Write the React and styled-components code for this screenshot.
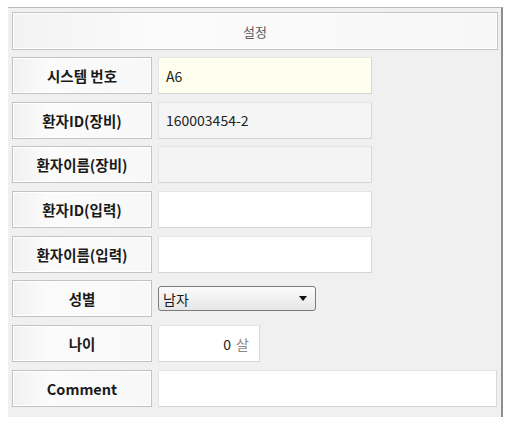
import { Fragment } from "react";
import styled, { createGlobalStyle } from "styled-components";

const GlobalStyle = createGlobalStyle`
  body {
    margin: 0;
    background: #ffffff;
    font-family: "Noto Sans CJK KR", "Noto Sans", sans-serif;
  }
`;

const Panel = styled.section`
  margin: 7px 0 0 8px;
  width: 486px;
  height: 405px;
  padding: 4px 3px 0 4px;
  background: #f0f0f0;
  border-top: 1px solid #b9b9b9;
  border-right: 2px solid #8e8e8e;
  display: flex;
  flex-direction: column;
  gap: 7px;
`;

const Header = styled.div`
  height: 36px;
  display: flex;
  align-items: center;
  justify-content: center;
  background: linear-gradient(to right, #f2f2f2, #fbfbfb 30%, #f7f7f7);
  border: 1px solid #c3c3c3;
  box-shadow: inset 0 0 0 1px #ffffff;
  color: #5a5a5a;
  font-size: 13px;
`;

const Form = styled.div`
  display: grid;
  grid-template-columns: 140px 1fr;
  grid-auto-rows: 37px;
  column-gap: 6px;
  row-gap: 7.7px;
`;

const Label = styled.div`
  display: flex;
  align-items: center;
  justify-content: center;
  background: linear-gradient(to right, #f1f1f1, #fbfbfb 25%, #f8f8f8);
  border: 1px solid #c2c2c2;
  box-shadow: inset 0 0 0 1px #ffffff;
  color: #1a1a1a;
  font-size: 14.5px;
  font-weight: 700;
`;

const Cell = styled.div`
  display: flex;
  align-items: center;
`;

const Field = styled.div`
  box-sizing: border-box;
  width: ${p => p.$width}px;
  height: 100%;
  display: flex;
  align-items: center;
  justify-content: ${p => (p.$right ? "flex-end" : "flex-start")};
  padding: ${p => (p.$right ? "0 10px 0 0" : "0 0 0 7px")};
  background: ${p => p.$bg || "#ffffff"};
  border: 1px solid #e4e4e4;
  border-bottom-color: #d4d4d4;
  border-right-color: #d8d8d8;
  color: #222222;
  font-size: 14px;
`;

const Unit = styled.span`
  margin-left: 5px;
  color: #8a8a8a;
`;

const Select = styled.div`
  box-sizing: border-box;
  width: 158px;
  height: 25px;
  display: flex;
  align-items: center;
  justify-content: space-between;
  padding: 0 8px 0 4px;
  background: linear-gradient(#fbfbfb, #e6e6e6);
  border: 1px solid #7c7c7c;
  border-radius: 3px;
  color: #1a1a1a;
  font-size: 14px;
`;

const rows = [
  { label: "시스템 번호", value: "A6", bg: "#fffff0", width: 214 },
  { label: "환자ID(장비)", value: "160003454-2", bg: "#f5f5f5", width: 214 },
  { label: "환자이름(장비)", value: "", bg: "#f4f4f4", width: 214 },
  { label: "환자ID(입력)", value: "", width: 214 },
  { label: "환자이름(입력)", value: "", width: 214 },
];

export default function App() {
  return (
    <>
      <GlobalStyle />
      <Panel>
        <Header>설정</Header>
        <Form>
          {rows.map(r => (
            <Fragment key={r.label}>
              <Label>{r.label}</Label>
              <Cell>
                <Field $bg={r.bg} $width={r.width}>{r.value}</Field>
              </Cell>
            </Fragment>
          ))}
          <Label>성별</Label>
          <Cell>
            <Select>
              <span>남자</span>
              <svg width="8" height="5" viewBox="0 0 8 5">
                <path d="M0 0h8L4 5z" fill="#111" />
              </svg>
            </Select>
          </Cell>
          <Label>나이</Label>
          <Cell>
            <Field $width={102} $right>
              0<Unit>살</Unit>
            </Field>
          </Cell>
          <Label>Comment</Label>
          <Cell>
            <Field $width={339} />
          </Cell>
        </Form>
      </Panel>
    </>
  );
}
